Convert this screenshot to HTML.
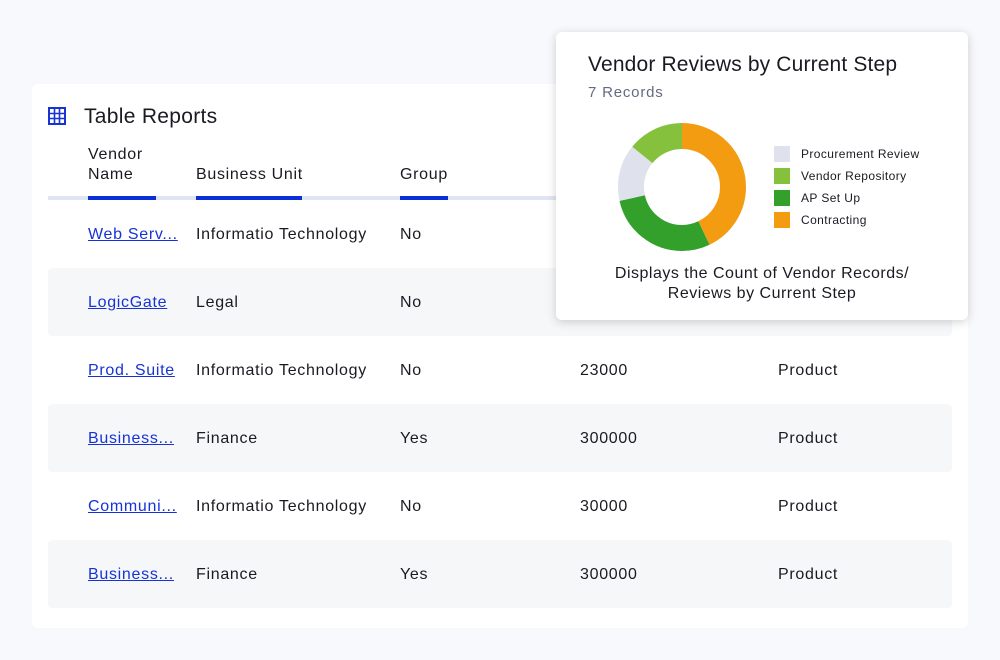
<!DOCTYPE html>
<html><head><meta charset="utf-8"><style>
*{margin:0;padding:0;box-sizing:border-box}
body{width:1000px;height:660px;background:#f8f9fd;font-family:"Liberation Sans",sans-serif;position:relative;overflow:hidden;color:#1a1a22}
.abs{position:absolute}
.card{left:32px;top:84px;width:936px;height:544px;background:#fff;border-radius:6px}
.row{left:48px;width:904px;height:68px;background:#f6f7f9;border-radius:4px}
.t{position:absolute;font-size:16px;line-height:20px;white-space:nowrap;letter-spacing:0.7px}
a{color:#1733d6;text-decoration:underline}
.pop{left:556px;top:32px;width:412px;height:288px;background:#fff;border-radius:6px;box-shadow:0 2px 10px rgba(0,0,0,.18)}
.lg{position:absolute;left:218px;width:16px;height:16px}
.lt{position:absolute;left:245px;font-size:12px;line-height:16px;color:#1a1a22;letter-spacing:0.4px;white-space:nowrap}
</style></head><body>
<div class="abs card"></div>
<div class="abs row" style="top:268px"></div>
<div class="abs row" style="top:404px"></div>
<div class="abs row" style="top:540px"></div>
<svg class="abs" style="left:48px;top:107px" width="18" height="18" viewBox="0 0 18 18"><rect x="1" y="1" width="16" height="16" fill="none" stroke="#1733d6" stroke-width="2"/><path d="M6.5 1V17M11.5 1V17M1 6.5H17M1 11.5H17" stroke="#1733d6" stroke-width="1.6"/></svg>
<div class="t" style="left:84px;top:106px;font-size:21px;line-height:22px;letter-spacing:0.3px">Table Reports</div>
<div class="t" style="left:88px;top:145px">Vendor<br>Name</div>
<div class="t" style="left:196px;top:165px">Business Unit</div>
<div class="t" style="left:400px;top:165px">Group</div>
<div class="abs" style="left:48px;top:196px;width:520px;height:4px;background:#e0e5f3"></div>
<div class="abs" style="left:88px;top:196px;width:68px;height:4px;background:#0b2fd6"></div>
<div class="abs" style="left:196px;top:196px;width:106px;height:4px;background:#0b2fd6"></div>
<div class="abs" style="left:400px;top:196px;width:48px;height:4px;background:#0b2fd6"></div>

<div class="t" style="left:88px;top:225px"><a>Web Serv...</a></div>
<div class="t" style="left:196px;top:225px">Informatio Technology</div>
<div class="t" style="left:400px;top:225px">No</div>

<div class="t" style="left:88px;top:293px"><a>LogicGate</a></div>
<div class="t" style="left:196px;top:293px">Legal</div>
<div class="t" style="left:400px;top:293px">No</div>

<div class="t" style="left:88px;top:361px"><a>Prod. Suite</a></div>
<div class="t" style="left:196px;top:361px">Informatio Technology</div>
<div class="t" style="left:400px;top:361px">No</div>
<div class="t" style="left:580px;top:361px">23000</div>
<div class="t" style="left:778px;top:361px">Product</div>

<div class="t" style="left:88px;top:429px"><a>Business...</a></div>
<div class="t" style="left:196px;top:429px">Finance</div>
<div class="t" style="left:400px;top:429px">Yes</div>
<div class="t" style="left:580px;top:429px">300000</div>
<div class="t" style="left:778px;top:429px">Product</div>

<div class="t" style="left:88px;top:497px"><a>Communi...</a></div>
<div class="t" style="left:196px;top:497px">Informatio Technology</div>
<div class="t" style="left:400px;top:497px">No</div>
<div class="t" style="left:580px;top:497px">30000</div>
<div class="t" style="left:778px;top:497px">Product</div>

<div class="t" style="left:88px;top:565px"><a>Business...</a></div>
<div class="t" style="left:196px;top:565px">Finance</div>
<div class="t" style="left:400px;top:565px">Yes</div>
<div class="t" style="left:580px;top:565px">300000</div>
<div class="t" style="left:778px;top:565px">Product</div>

<div class="abs pop">
<div class="t" style="left:32px;top:21px;font-size:21px;line-height:24px;letter-spacing:0.15px">Vendor Reviews by Current Step</div>
<div class="t" style="left:32px;top:51px;font-size:15px;color:#666a80;letter-spacing:0.8px">7 Records</div>
<svg style="position:absolute;left:62px;top:91px" width="128" height="128" viewBox="0 0 128 128">
<g transform="rotate(-90 64 64)" fill="none" stroke-width="26">
<circle cx="64" cy="64" r="51" stroke="#f39c12" stroke-dasharray="137.3 400" stroke-dashoffset="0"/>
<circle cx="64" cy="64" r="51" stroke="#33a02c" stroke-dasharray="91.5 400" stroke-dashoffset="-137.3"/>
<circle cx="64" cy="64" r="51" stroke="#dfe1ec" stroke-dasharray="45.8 400" stroke-dashoffset="-228.8"/>
<circle cx="64" cy="64" r="51" stroke="#85c13d" stroke-dasharray="45.8 400" stroke-dashoffset="-274.6"/>
</g></svg>
<div class="lg" style="top:114px;background:#dfe1ec"></div><div class="lt" style="top:114px">Procurement Review</div>
<div class="lg" style="top:136px;background:#85c13d"></div><div class="lt" style="top:136px">Vendor Repository</div>
<div class="lg" style="top:158px;background:#33a02c"></div><div class="lt" style="top:158px">AP Set Up</div>
<div class="lg" style="top:180px;background:#f39c12"></div><div class="lt" style="top:180px">Contracting</div>
<div class="t" style="left:0;width:412px;top:232px;text-align:center;font-size:16px;line-height:20px;letter-spacing:0.5px;white-space:normal">Displays the Count of Vendor Records/<br>Reviews by Current Step</div>
</div>
</body></html>
